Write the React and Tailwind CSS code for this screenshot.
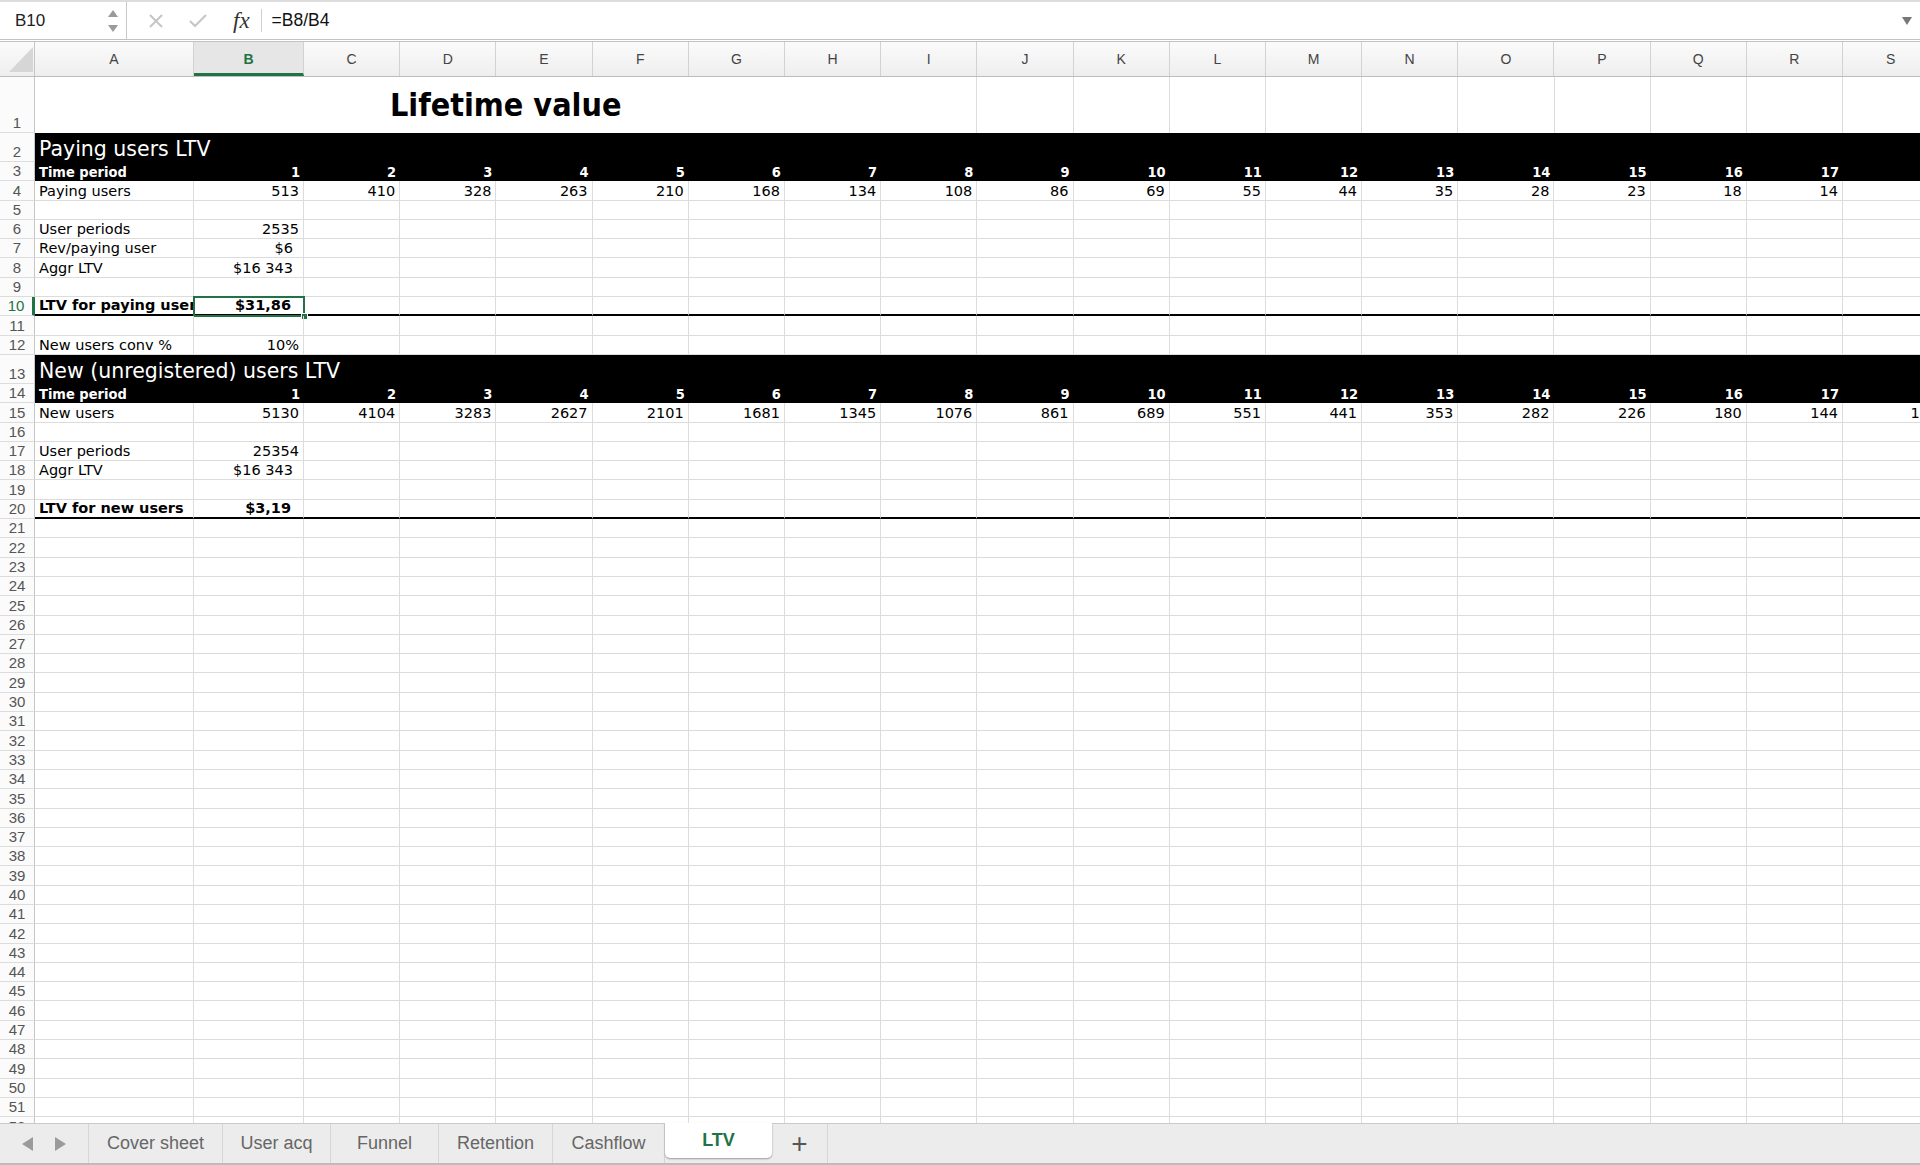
import React from 'react';

const COLS = ['A', 'B', 'C', 'D', 'E', 'F', 'G', 'H', 'I', 'J', 'K', 'L', 'M', 'N', 'O', 'P', 'Q', 'R', 'S'];
const W = ['w-[159px]', 'w-[110px]'].concat(Array(17).fill('w-[96.2px]'));

const CELL_FONT = "font-['DejaVu_Sans',sans-serif] text-[14.5px] leading-[17px] text-black";
const COND_BOLD = "font-['DejaVu_Sans_Condensed','DejaVu_Sans',sans-serif] font-bold";

const paying = [513, 410, 328, 263, 210, 168, 134, 108, 86, 69, 55, 44, 35, 28, 23, 18, 14];
const newUsers = [5130, 4104, 3283, 2627, 2101, 1681, 1345, 1076, 861, 689, 551, 441, 353, 282, 226, 180, 144];
const periods = Array.from({ length: 17 }, (_, i) => i + 1);

function RowHeader({ n, h, selected }) {
  return (
    <div
      className={`w-[35px] shrink-0 ${h} flex items-end justify-center bg-[#fbfbfb] border-b border-[#dcdcdc] font-['Liberation_Sans',sans-serif] text-[15px] leading-[18px] ${
        selected ? 'text-[#217346] border-r-[3px] border-r-[#217346]' : 'text-[#555] border-r border-r-[#c6c6c6]'
      }`}
    >
      {n}
    </div>
  );
}

function GridRow({ n, h = 'h-[19.3px]', thick, cells = {}, bold, selected }) {
  return (
    <div className="flex">
      <RowHeader n={n} h={h} selected={selected} />
      {COLS.map((c, i) => {
        const v = cells[i];
        const right = i > 0;
        let pad = '';
        if (v) {
          if (v.pad) pad = bold ? 'pr-[12px]' : 'pr-[10px]';
          else if (v.flush) pad = '';
          else if (right) pad = 'pr-[4px]';
        }
        return (
          <div
            key={c}
            className={`${W[i]} ${h} shrink-0 relative flex items-end whitespace-nowrap overflow-hidden border-r border-[#dcdcdc] ${
              thick ? 'border-b-2 border-b-black' : 'border-b'
            } ${right ? 'justify-end' : 'justify-start pl-[4px]'} ${CELL_FONT} ${bold ? 'font-bold' : ''}`}
          >
            {v && <span className={pad}>{v.t}</span>}
          </div>
        );
      })}
    </div>
  );
}

function BandRow({ n, title }) {
  return (
    <div className="flex">
      <RowHeader n={n} h="h-[29px]" />
      <div className="flex-1 h-[29px] bg-black flex items-end pl-[4px] pb-[1px] text-white font-['DejaVu_Sans',sans-serif] text-[20.5px] leading-[24px] whitespace-nowrap">
        {title}
      </div>
    </div>
  );
}

function PeriodRow({ n }) {
  return (
    <div className="flex">
      <RowHeader n={n} h="h-[19.3px]" />
      {COLS.map((c, i) => (
        <div
          key={c}
          className={`${W[i]} h-[19.3px] shrink-0 bg-black text-white flex items-end whitespace-nowrap text-[14.5px] leading-[17px] ${COND_BOLD} ${
            i === 0 ? 'pl-[4px]' : 'justify-end pr-[4px]'
          }`}
        >
          {i === 0 ? 'Time period' : periods[i - 1] ?? ''}
        </div>
      ))}
    </div>
  );
}

function TitleRow() {
  return (
    <div className="flex">
      <RowHeader n={1} h="h-[56px]" />
      <div className="w-[942.4px] h-[56px] shrink-0 flex items-center justify-center border-r border-[#dcdcdc]">
        <span className={`${COND_BOLD} text-[32px] leading-[36px] text-black`}>Lifetime value</span>
      </div>
      {COLS.slice(9).map((c, i) => (
        <div key={c} className={`${W[9 + i]} h-[56px] shrink-0 border-r border-[#dcdcdc]`} />
      ))}
    </div>
  );
}

const lab = (t) => ({ t });

function Sheet() {
  const empty = (n) => <GridRow key={n} n={n} />;
  const rows = [];
  rows.push(<TitleRow key={1} />);
  rows.push(<BandRow key={2} n={2} title="Paying users LTV" />);
  rows.push(<PeriodRow key={3} n={3} />);
  const r4 = { 0: lab('Paying users') };
  paying.forEach((v, i) => (r4[i + 1] = lab(String(v))));
  rows.push(<GridRow key={4} n={4} cells={r4} />);
  rows.push(empty(5));
  rows.push(<GridRow key={6} n={6} cells={{ 0: lab('User periods'), 1: lab('2535') }} />);
  rows.push(<GridRow key={7} n={7} cells={{ 0: lab('Rev/paying user'), 1: { t: '$6', pad: true } }} />);
  rows.push(<GridRow key={8} n={8} cells={{ 0: lab('Aggr LTV'), 1: { t: '$16 343', pad: true } }} />);
  rows.push(empty(9));
  rows.push(
    <div key={10} className="relative">
      <GridRow n={10} thick bold selected cells={{ 0: lab('LTV for paying users'), 1: { t: '$31,86', pad: true } }} />
      <div className="absolute left-[193px] top-[-1px] w-[112px] h-[21.3px] border-2 border-[#217346] pointer-events-none" />
      <div className="absolute left-[301px] top-[16px] w-[7px] h-[7px] bg-[#217346] border border-white" />
    </div>
  );
  rows.push(empty(11));
  rows.push(<GridRow key={12} n={12} cells={{ 0: lab('New users conv %'), 1: lab('10%') }} />);
  rows.push(<BandRow key={13} n={13} title="New (unregistered) users LTV" />);
  rows.push(<PeriodRow key={14} n={14} />);
  const r15 = { 0: lab('New users') };
  newUsers.forEach((v, i) => (r15[i + 1] = lab(String(v))));
  r15[18] = { t: '115', flush: true };
  rows.push(<GridRow key={15} n={15} cells={r15} />);
  rows.push(empty(16));
  rows.push(<GridRow key={17} n={17} cells={{ 0: lab('User periods'), 1: lab('25354') }} />);
  rows.push(<GridRow key={18} n={18} cells={{ 0: lab('Aggr LTV'), 1: { t: '$16 343', pad: true } }} />);
  rows.push(empty(19));
  rows.push(<GridRow key={20} n={20} thick bold cells={{ 0: lab('LTV for new users'), 1: { t: '$3,19', pad: true } }} />);
  for (let n = 21; n <= 53; n++) rows.push(empty(n));
  return <div className="flex flex-col">{rows}</div>;
}

function ColumnHeader() {
  return (
    <div className="flex h-[35px] shrink-0 bg-gradient-to-b from-[#fbfbfb] to-[#eeeeee] border-b border-[#bdbdbd]">
      <div className="w-[35px] shrink-0 border-r border-[#c6c6c6] relative">
        <svg className="absolute left-[9px] top-[5px]" width="24" height="25" viewBox="0 0 24 25">
          <polygon points="0,25 24,0 24,25" fill="#d6d6d6" />
        </svg>
      </div>
      {COLS.map((c, i) => (
        <div
          key={c}
          className={`${W[i]} shrink-0 flex items-center justify-center border-r border-[#d2d2d2] font-['Liberation_Sans',sans-serif] text-[14px] ${
            i === 1 ? 'text-[#217346] font-bold bg-[#e6e6e6] border-b-[3px] border-b-[#217346] pt-[3px]' : 'text-[#444]'
          }`}
        >
          {c}
        </div>
      ))}
    </div>
  );
}

function FormulaBar() {
  return (
    <div className="h-[42px] shrink-0 flex bg-white border-t-2 border-t-[#dcdcdc] border-b-[3px] border-double border-b-[#c2c2c2] font-['Liberation_Sans',sans-serif]">
      <div className="w-[127px] shrink-0 flex items-center justify-between pl-[15px] pr-[8px] border-r border-[#c8c8c8]">
        <span className="text-[17px] text-[#222]">B10</span>
        <div className="flex flex-col gap-[8px]">
          <svg width="10" height="7" viewBox="0 0 10 7"><polygon points="5,0 10,7 0,7" fill="#9a9a9a" /></svg>
          <svg width="10" height="7" viewBox="0 0 10 7"><polygon points="0,0 10,0 5,7" fill="#9a9a9a" /></svg>
        </div>
      </div>
      <div className="flex items-center pl-[21px] gap-[25px]">
        <svg width="16" height="14" viewBox="0 0 16 14">
          <path d="M2 1 L14 13 M14 1 L2 13" stroke="#c6c6c6" strokeWidth="2" fill="none" />
        </svg>
        <svg width="18" height="14" viewBox="0 0 18 14">
          <path d="M1 7 L6 12 L17 1" stroke="#c6c6c6" strokeWidth="2" fill="none" />
        </svg>
      </div>
      <span className="ml-[26px] self-center font-['Liberation_Serif',serif] italic text-[23px] text-[#333] leading-none">fx</span>
      <div className="w-px h-[23px] bg-[#cfcfcf] self-center ml-[11px]" />
      <span className="ml-[10px] self-center text-[17.5px] text-[#111]">=B8/B4</span>
      <div className="flex-1" />
      <svg className="self-center mr-[8px]" width="10" height="8" viewBox="0 0 10 8"><polygon points="0,0 10,0 5,8" fill="#777" /></svg>
    </div>
  );
}

function TabBar() {
  const tabs = [
    ['Cover sheet', 'w-[134px]'],
    ['User acq', 'w-[108px]'],
    ['Funnel', 'w-[108px]'],
    ['Retention', 'w-[114px]'],
    ['Cashflow', 'w-[112px]'],
  ];
  return (
    <div className="h-[42px] shrink-0 flex bg-[#ececec] border-t border-[#c9c9c9] border-b-2 border-b-[#bcbcbc] font-['Liberation_Sans',sans-serif] text-[18px] text-[#666]">
      <div className="w-[89px] shrink-0 flex items-center pl-[22px] gap-[22px] border-r border-[#d6d6d6]">
        <svg width="11" height="14" viewBox="0 0 11 14"><polygon points="11,0 11,14 0,7" fill="#9b9b9b" /></svg>
        <svg width="11" height="14" viewBox="0 0 11 14"><polygon points="0,0 0,14 11,7" fill="#9b9b9b" /></svg>
      </div>
      {tabs.map(([t, w]) => (
        <div key={t} className={`${w} shrink-0 flex items-center justify-center border-r border-[#d6d6d6]`}>
          {t}
        </div>
      ))}
      <div className="w-[107px] shrink-0 -mt-px h-[35px] bg-white rounded-b-[5px] shadow-[0_1px_2px_rgba(0,0,0,0.35)] flex items-center justify-center font-bold text-[#217346]">
        LTV
      </div>
      <div className="w-[56px] shrink-0 flex items-center justify-center border-r border-[#d6d6d6] text-[28px] leading-none text-[#555]">
        +
      </div>
    </div>
  );
}

export default function App() {
  return (
    <div className="w-[1920px] h-[1165px] overflow-hidden flex flex-col bg-white">
      <FormulaBar />
      <ColumnHeader />
      <div className="flex-1 overflow-hidden">
        <Sheet />
      </div>
      <TabBar />
    </div>
  );
}
